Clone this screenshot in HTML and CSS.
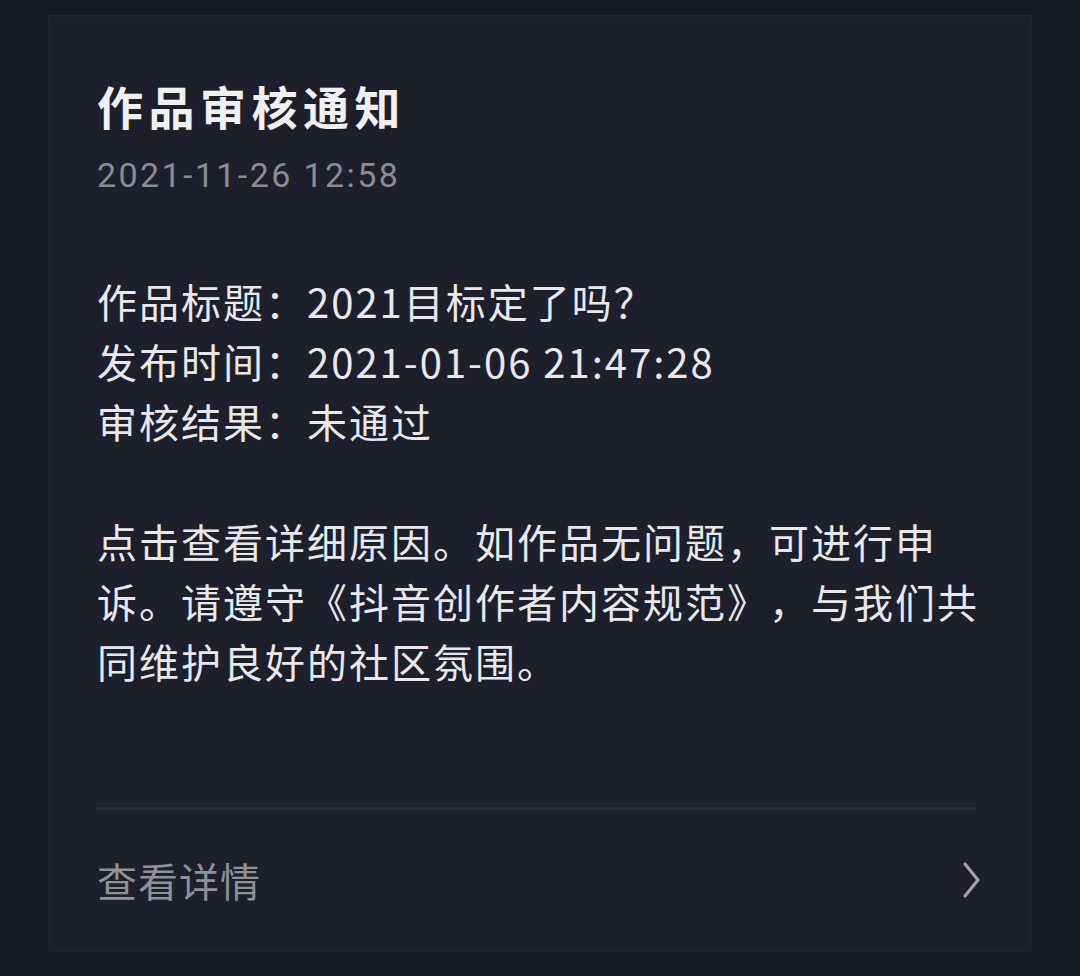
FILE: index.html
```html
<!DOCTYPE html>
<html lang="zh-CN">
<head>
<meta charset="utf-8">
<link rel="stylesheet" href="styles.css">
</head>
<body>
<div class="card">
  <div class="title">作品审核通知</div>
  <div class="date">2021-11-26 12:58</div>
  <div class="info">
    <div class="line">作品标题：2021目标定了吗？</div>
    <div class="line">发布时间：2021-01-06 21:47:28</div>
    <div class="line">审核结果：未通过</div>
  </div>
  <div class="para">点击查看详细原因。如作品无问题，可进行申<br>诉。请遵守《抖音创作者内容规范》，与我们共<br>同维护良好的社区氛围。</div>
  <div class="divider"></div>
  <div class="footer">
    <span class="more">查看详情</span>
    <svg class="chev" width="22" height="38" viewBox="0 0 22 38"><polyline points="5,3 18,19 5,35" fill="none" stroke="#a0a1a8" stroke-width="3.2" stroke-linecap="round" stroke-linejoin="round"/></svg>
  </div>
</div>
</body>
</html>
```
FILE: styles.css
```css
html, body {
  margin: 0;
  padding: 0;
  background: #161823;
  width: 1080px;
  height: 976px;
  overflow: hidden;
}
body {
  font-family: "Noto Sans CJK SC", "Noto Sans", sans-serif;
  text-spacing-trim: space-all;
}
.card {
  margin: 15px 0 0 48px;
  width: 984px;
  height: 937px;
  box-sizing: border-box;
  background: #1d1f2a;
  border: 2px solid #20222d;
  padding: 58px 54px 0 47px;
  overflow: hidden;
}
.title {
  font-size: 46px;
  font-weight: 700;
  letter-spacing: 5.5px;
  line-height: 60px;
  color: #f0f0f3;
}
.date {
  margin-top: 15px;
  font-family: Roboto, "Noto Sans CJK SC", sans-serif;
  font-size: 34px;
  letter-spacing: 2.4px;
  line-height: 50px;
  color: #8a8b93;
}
.info {
  margin-top: 71px;
}
.line, .para {
  font-size: 40px;
  letter-spacing: 2px;
  line-height: 60px;
  color: #e8e8ec;
  white-space: nowrap;
}
.para {
  margin-top: 60px;
}
.divider {
  margin-top: 112px;
  height: 7px;
  border-top: 2px solid #23252f;
  border-bottom: 3px solid #2a2c37;
  box-sizing: border-box;
}
.footer {
  height: 140px;
  display: flex;
  align-items: center;
  justify-content: space-between;
}
.more {
  font-size: 40px;
  letter-spacing: 1px;
  color: #8f9098;
}
.chev {
  margin-right: -6px;
}
```
